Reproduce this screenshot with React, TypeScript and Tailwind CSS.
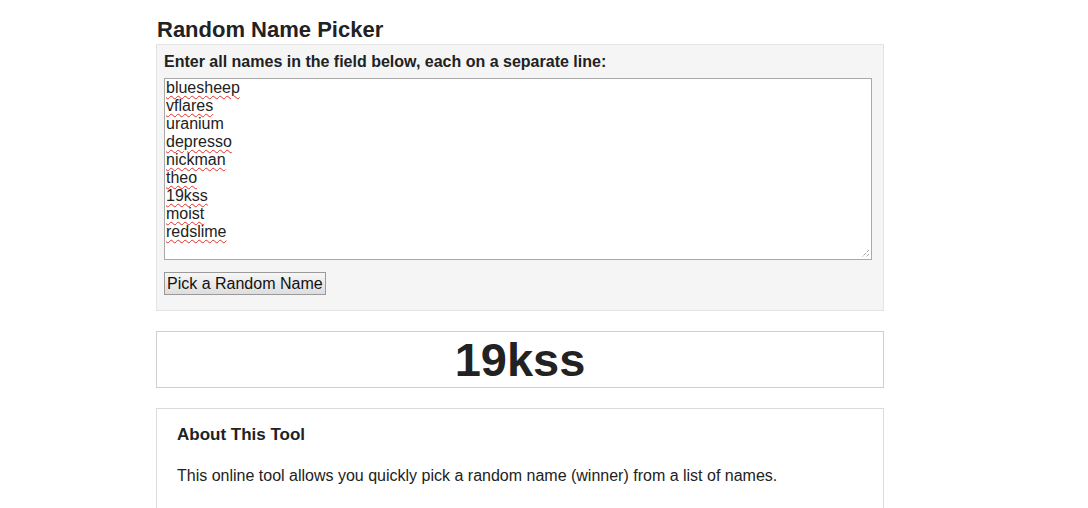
import { useState } from 'react';

const names = ['bluesheep', 'vflares', 'uranium', 'depresso', 'nickman', 'theo', '19kss', 'moist', 'redslime'];
const known = ['uranium'];

export default function App() {
  const [winner, setWinner] = useState('19kss');

  const pick = () => {
    setWinner(names[Math.floor(Math.random() * names.length)]);
  };

  return (
    <div className="min-h-[508px] bg-white pl-[156px] pt-[17px] text-[#222] font-['Liberation_Sans',Arial,sans-serif]">
      <div className="w-[728px]">
        <h1 className="mb-[2px] text-[22px] font-bold leading-[25px] pl-px">Random Name Picker</h1>

        <div className="border border-[#e3e3e3] bg-[#f5f5f5] px-[7px] pt-[8px] pb-[15px]">
          <label className="block text-base font-bold leading-[18px]">
            Enter all names in the field below, each on a separate line:
          </label>
          <div className="relative mt-[7px] h-[182px] w-[708px] border border-[#a9a9a9] bg-white px-px text-base leading-[18px]">
            {names.map((n) => (
              <div key={n}>
                <span
                  className={
                    known.includes(n)
                      ? ''
                      : 'underline decoration-wavy decoration-[#e0302a] decoration-1 underline-offset-2'
                  }
                >
                  {n}
                </span>
              </div>
            ))}
            <svg className="absolute bottom-px right-px" width="9" height="9" viewBox="0 0 9 9">
              <path d="M8 1 L1 8 M8 5 L5 8" stroke="#777" strokeWidth="1" strokeDasharray="1 1" />
            </svg>
          </div>
          <button
            onClick={pick}
            className="mt-3 block h-[23px] border border-[#9a9a9a] bg-gradient-to-b from-[#f6f6f6] to-[#dedede] px-[2px] text-base leading-[18px] text-[#111]"
          >
            Pick a Random Name
          </button>
        </div>

        <div className="mt-5 flex h-[57px] items-center justify-center border border-[#cfcfcf] bg-white">
          <span className="text-[47px] font-bold leading-none">{winner}</span>
        </div>

        <div className="mt-5 border border-[#dcdcdc] bg-white px-5 pt-4 pb-6">
          <h2 className="text-[17px] font-bold leading-5">About This Tool</h2>
          <p className="mt-5 text-base leading-[22px]">
            This online tool allows you quickly pick a random name (winner) from a list of names.
          </p>
        </div>
      </div>
    </div>
  );
}
